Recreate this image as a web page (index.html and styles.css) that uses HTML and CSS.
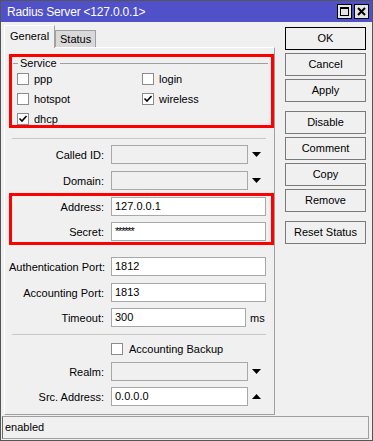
FILE: index.html
```html
<!DOCTYPE html>
<html lang="en">
<head>
  <meta charset="UTF-8" />
  <title>Radius Server</title>
  <link rel="stylesheet" href="styles.css">
</head>
<body>
  <div class="window">
    <div class="titlebar">
      <span class="title">Radius Server &lt;127.0.0.1&gt;</span>
      <div class="title-btns">
        <span class="tbtn">
          <svg width="9" height="9" viewBox="0 0 9 9"><rect x="0.5" y="0.5" width="8" height="8" fill="none" stroke="#000"/><rect x="0" y="0" width="9" height="2" fill="#000"/></svg>
        </span>
        <span class="tbtn">
          <svg width="9" height="9" viewBox="0 0 9 9"><path d="M1 1 L8 8 M8 1 L1 8" stroke="#000" stroke-width="2"/></svg>
        </span>
      </div>
    </div>

    <div class="main">
      <div class="left">
        <div class="tabs">
          <div class="tab active">General</div>
          <div class="tab">Status</div>
        </div>

        <div class="panel">
          <div class="mark group">
            <div class="group-title"><span class="line short"></span><span>Service</span><span class="line"></span></div>
            <div class="checks">
              <div class="check"><span class="box"></span>ppp</div>
              <div class="check"><span class="box"></span>login</div>
              <div class="check"><span class="box"></span>hotspot</div>
              <div class="check"><span class="box"><svg width="10" height="10" viewBox="0 0 10 10"><path d="M1.5 4.5 L4 7 L8.5 2" fill="none" stroke="#000" stroke-width="1.6"/></svg></span>wireless</div>
              <div class="check"><span class="box"><svg width="10" height="10" viewBox="0 0 10 10"><path d="M1.5 4.5 L4 7 L8.5 2" fill="none" stroke="#000" stroke-width="1.6"/></svg></span>dhcp</div>
            </div>
          </div>

          <div class="sep"></div>

          <div class="row first">
            <span class="lbl">Called ID:</span>
            <span class="field combo off"></span>
            <svg class="arrow" width="9" height="5" viewBox="0 0 9 5"><path d="M0 0 H9 L4.5 5 Z" fill="#000"/></svg>
          </div>
          <div class="row">
            <span class="lbl">Domain:</span>
            <span class="field combo off"></span>
            <svg class="arrow" width="9" height="5" viewBox="0 0 9 5"><path d="M0 0 H9 L4.5 5 Z" fill="#000"/></svg>
          </div>

          <div class="mark addr">
            <div class="row">
              <span class="lbl">Address:</span>
              <span class="field">127.0.0.1</span>
            </div>
            <div class="row">
              <span class="lbl">Secret:</span>
              <span class="field secret">******</span>
            </div>
          </div>

          <div class="row auth">
            <span class="lbl">Authentication Port:</span>
            <span class="field">1812</span>
          </div>
          <div class="row">
            <span class="lbl">Accounting Port:</span>
            <span class="field">1813</span>
          </div>
          <div class="row timeout">
            <span class="lbl">Timeout:</span>
            <span class="field short">300</span>
            <span class="unit">ms</span>
          </div>

          <div class="sep lower"></div>

          <div class="check backup"><span class="box"></span>Accounting Backup</div>

          <div class="row realm">
            <span class="lbl">Realm:</span>
            <span class="field combo off"></span>
            <svg class="arrow" width="9" height="5" viewBox="0 0 9 5"><path d="M0 0 H9 L4.5 5 Z" fill="#000"/></svg>
          </div>
          <div class="row src">
            <span class="lbl">Src. Address:</span>
            <span class="field combo">0.0.0.0</span>
            <svg class="arrow" width="9" height="5" viewBox="0 0 9 5"><path d="M0 5 H9 L4.5 0 Z" fill="#000"/></svg>
          </div>
        </div>
      </div>

      <div class="buttons">
        <div class="btn default">OK</div>
        <div class="btn">Cancel</div>
        <div class="btn">Apply</div>
        <div class="btn spaced">Disable</div>
        <div class="btn">Comment</div>
        <div class="btn">Copy</div>
        <div class="btn">Remove</div>
        <div class="btn spaced">Reset Status</div>
      </div>
    </div>

    <div class="statusbar">enabled</div>
  </div>
</body>
</html>
```

FILE: styles.css
```css
body {
  margin: 0;
  font-family: "Liberation Sans", Arial, sans-serif;
  font-size: 11px;
  color: #000;
  background: #fff;
}

.window {
  width: 373px;
  height: 441px;
  box-sizing: border-box;
  border: 1px solid #555;
  background: #f0f0f0;
  display: flex;
  flex-direction: column;
}

.titlebar {
  height: 21px;
  flex-shrink: 0;
  background: #5050c8;
  display: flex;
  align-items: center;
  padding: 0 3px 0 6px;
}

.title {
  flex: 1;
  color: #fff;
  font-size: 12px;
  letter-spacing: -0.2px;
}

.title-btns {
  display: flex;
  gap: 2px;
}

.tbtn {
  width: 15px;
  height: 15px;
  box-sizing: border-box;
  border: 1px solid #000;
  background: #e4e4e4;
  display: flex;
  align-items: center;
  justify-content: center;
}

.main {
  height: 394px;
  flex-shrink: 0;
  display: flex;
  gap: 10px;
  padding-left: 3px;
}

.left {
  width: 271px;
  box-sizing: border-box;
  padding: 3px 0 1px;
  display: flex;
  flex-direction: column;
}

/* tabs */
.tabs {
  height: 22px;
  display: flex;
  align-items: flex-end;
}

.tab {
  box-sizing: border-box;
  height: 17px;
  width: 41px;
  padding-left: 4px;
  line-height: 16px;
  background: #d9d9d9;
  border: 1px solid #a0a0a0;
  border-bottom: none;
}

.tab.active {
  position: relative;
  z-index: 1;
  height: 23px;
  width: 51px;
  margin-bottom: -1px;
  padding-left: 5px;
  line-height: 21px;
  background: #f0f0f0;
  border-color: #fff #a0a0a0 transparent #fff;
}

.panel {
  flex: 1;
  border: 1px solid;
  border-color: #fff #a0a0a0 #a0a0a0 #fff;
  padding: 6px 0 0 4px;
}

/* red highlight boxes */
.mark {
  box-sizing: border-box;
  width: 265px;
  border: 3px solid #f00;
}

.group {
  height: 74px;
}

.group-title {
  height: 12px;
  display: flex;
  align-items: center;
  gap: 2px;
  padding: 0 3px 0 1px;
}

.group-title .line {
  flex: 1;
  height: 1px;
  background: #a0a0a0;
  margin-left: 1px;
}

.group-title .line.short {
  flex: none;
  width: 5px;
  margin: 0;
}

.checks {
  display: grid;
  grid-template-columns: 125px 1fr;
  grid-auto-rows: 12px;
  row-gap: 8px;
  padding: 4px 0 0 5px;
}

.check {
  display: flex;
  align-items: center;
  gap: 5px;
  height: 12px;
  line-height: 12px;
}

.box {
  width: 12px;
  height: 12px;
  box-sizing: border-box;
  border: 1px solid #8c8c8c;
  background: #fff;
  display: flex;
  align-items: center;
  justify-content: center;
  flex-shrink: 0;
}

.sep {
  margin: 10px 8px 0 3px;
  border-top: 1px solid #c8c8c8;
}

.sep.lower {
  margin-top: 7px;
}

/* form rows */
.row {
  height: 19px;
  display: flex;
  align-items: center;
  margin-top: 7px;
}

.row.first {
  margin-top: 6px;
}

.lbl {
  width: 95px;
  margin-right: 7px;
  text-align: right;
  white-space: nowrap;
}

.field {
  box-sizing: border-box;
  width: 155px;
  height: 19px;
  line-height: 17px;
  padding-left: 3px;
  border: 1px solid #a8a8a8;
  background: #fff;
}

.field.combo {
  width: 137px;
}

.field.short {
  width: 135px;
}

.field.off {
  background: #f0f0f0;
}

.field.secret {
  letter-spacing: -1.2px;
}

.arrow {
  margin-left: 4px;
}

.unit {
  margin-left: 4px;
}

.addr {
  margin-top: 3px;
  padding: 1px 0;
}

.addr .row {
  margin-top: 6px;
}

.addr .row:first-child {
  margin-top: 0;
}

.addr .lbl {
  width: 92px;
}

.row.auth {
  margin-top: 12px;
}

.row.timeout {
  margin-top: 6px;
}

.check.backup {
  margin: 8px 0 0 102px;
  gap: 6px;
}

.row.src {
  margin-top: 6px;
}

/* right column */
.buttons {
  padding-top: 5px;
  display: flex;
  flex-direction: column;
  gap: 3px;
}

.btn {
  box-sizing: border-box;
  width: 81px;
  height: 23px;
  line-height: 21px;
  text-align: center;
  border: 1px solid #7a7a7a;
  background: #f0f0f0;
}

.btn.default {
  border-color: #000;
}

.btn.spaced {
  margin-top: 6px;
}

.statusbar {
  box-sizing: border-box;
  height: 23px;
  margin: 0 3px 1px 1px;
  padding-left: 2px;
  line-height: 21px;
  border: 1px solid #a0a0a0;
  border-left-color: #6a6a6a;
}
```
